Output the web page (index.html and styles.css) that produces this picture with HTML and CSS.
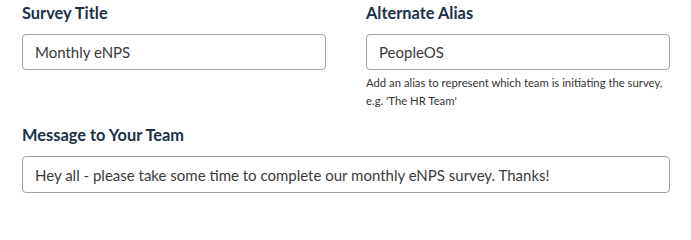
FILE: index.html
```html
<!DOCTYPE html>
<html lang="en">
<head>
<meta charset="utf-8">
<title>Survey settings</title>
<link rel="stylesheet" href="styles.css">
</head>
<body>
<form class="form">
  <div class="row">
    <div class="field">
      <label class="label" for="title">Survey Title</label>
      <input class="input" id="title" type="text" value="Monthly eNPS">
    </div>
    <div class="field">
      <label class="label" for="alias">Alternate Alias</label>
      <input class="input" id="alias" type="text" value="PeopleOS">
      <p class="help">Add an alias to represent which team is initiating the survey, e.g. 'The HR Team'</p>
    </div>
  </div>
  <div class="field field-wide">
    <label class="label" for="msg">Message to Your Team</label>
    <input class="input" id="msg" type="text" value="Hey all - please take some time to complete our monthly eNPS survey. Thanks!">
  </div>
</form>
</body>
</html>
```

FILE: styles.css
```css
html, body {
  margin: 0;
  padding: 0;
  background: #ffffff;
}
body {
  font-family: Lato, "Noto Sans", "Liberation Sans", sans-serif;
  color: #333;
}
.form {
  padding: 3px 21px 0 22px;
  display: flex;
  flex-direction: column;
  gap: 15px;
}
.row {
  display: grid;
  grid-template-columns: 1fr 1fr;
  column-gap: 40px;
}
.field {
  display: flex;
  flex-direction: column;
}
.label {
  font-size: 16.4px;
  font-weight: 700;
  line-height: 20px;
  color: #1b3148;
  margin-bottom: 11px;
}
.input {
  box-sizing: border-box;
  height: 36px;
  width: 100%;
  margin: 0;
  border: 1px solid #a3a3a3;
  border-radius: 4px;
  padding: 0 12px;
  font-family: inherit;
  font-size: 15px;
  color: #3a3a3a;
  background: #fff;
  outline: none;
}
.help {
  margin: 4px 0 0;
  font-size: 11.3px;
  line-height: 18px;
  color: #333;
}
.field-wide .input {
  height: 37px;
}
```
